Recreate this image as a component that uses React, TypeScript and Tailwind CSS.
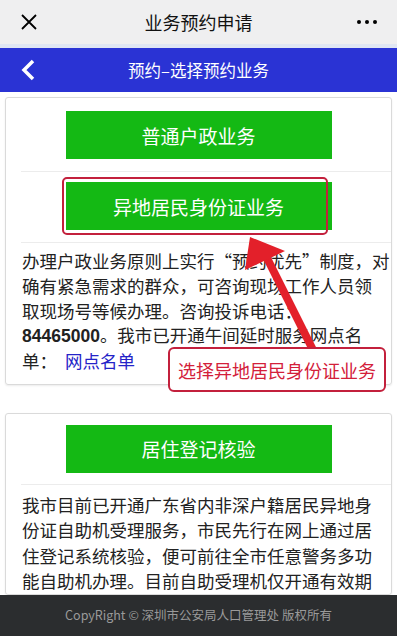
import { FC } from "react";

const font = { fontFamily: '"Noto Sans CJK SC", "Noto Sans", sans-serif' };

const GreenButton: FC<{ label: string }> = ({ label }) => (
    <div className="w-[266px] h-[48px] bg-[#14b914] flex items-center justify-center text-white text-[19px] leading-none">
        {label}
    </div>
);

const App: FC = () => (
    <div className="relative w-[397px] h-[636px] overflow-hidden flex flex-col bg-white text-[#222]" style={font}>
        {/* wechat top bar */}
        <div className="h-[44px] bg-[#efeff0] grid grid-cols-[1fr_auto_1fr] items-center px-[20px]">
            <svg width="18" height="18" viewBox="0 0 18 18" className="text-black">
                <path d="M2 2L16 16M16 2L2 16" stroke="currentColor" strokeWidth="1.8" />
            </svg>
            <div className="text-[18px] text-[#111] leading-none">业务预约申请</div>
            <div className="flex justify-end gap-[4px]">
                <div className="w-[4px] h-[4px] rounded-full bg-black" />
                <div className="w-[4px] h-[4px] rounded-full bg-black" />
                <div className="w-[4px] h-[4px] rounded-full bg-black" />
            </div>
        </div>
        <div className="h-[4px] bg-[#dfe6f3]" />
        {/* blue nav */}
        <div className="h-[44px] bg-[#2a33d4] grid grid-cols-[1fr_auto_1fr] items-center px-[20px]">
            <svg width="16" height="22" viewBox="0 0 16 22">
                <path d="M13 2L4 11L13 20" stroke="white" strokeWidth="3.5" fill="none" />
            </svg>
            <div className="text-[16.5px] text-white leading-none">预约–选择预约业务</div>
            <div />
        </div>

        {/* content */}
        <div className="flex-1 overflow-hidden px-[5px] pt-[5px]">
            <div className="border border-[#dadada] rounded-[3px] shadow-[0_1px_2px_rgba(0,0,0,0.08)]">
                <div className="pt-[13px] pb-[12px] flex justify-center">
                    <GreenButton label="普通户政业务" />
                </div>
                <div className="ml-[15px] border-t border-[#ececec]" />
                <div className="relative pt-[10px] pb-[12px] flex justify-center">
                    <GreenButton label="异地居民身份证业务" />
                    <div className="absolute left-[56px] top-[5px] w-[266px] h-[58px] border-2 border-[#c3203c] rounded-[5px]" />
                </div>
                <div className="ml-[15px] border-t border-[#ececec]" />
                <div className="px-[16px] pt-[6px] pb-[10px] text-[17.5px] leading-[24.75px] whitespace-nowrap">
                    <div>办理户政业务原则上实行“预约优先”制度，对</div>
                    <div>确有紧急需求的群众，可咨询现场工作人员领</div>
                    <div>取现场号等候办理。咨询投诉电话：</div>
                    <div>
                        <span className="font-bold" style={{ fontFamily: '"Liberation Sans", sans-serif' }}>84465000</span>
                        。我市已开通午间延时服务网点名
                    </div>
                    <div>
                        单： <span className="text-[#2323c8] ml-[4px]">网点名单</span>
                    </div>
                </div>
            </div>

            <div className="mt-[28px] border border-[#dadada] rounded-[3px] shadow-[0_1px_2px_rgba(0,0,0,0.08)]">
                <div className="pt-[11px] pb-[11px] flex justify-center">
                    <GreenButton label="居住登记核验" />
                </div>
                <div className="ml-[15px] border-t border-[#ececec]" />
                <div className="px-[16px] pt-[7px] text-[17.5px] leading-[25.5px] whitespace-nowrap">
                    <div>我市目前已开通广东省内非深户籍居民异地身</div>
                    <div>份证自助机受理服务，市民先行在网上通过居</div>
                    <div>住登记系统核验，便可前往全市任意警务多功</div>
                    <div>能自助机办理。目前自助受理机仅开通有效期</div>
                </div>
            </div>
        </div>

        {/* footer */}
        <div className="h-[41px] bg-[#2b2d2f] flex items-center justify-center text-[12.5px] text-[#9a9a9a]">
            CopyRight © 深圳市公安局人口管理处 版权所有
        </div>

        {/* annotation arrow */}
        <svg className="absolute inset-0 pointer-events-none" width="397" height="636" viewBox="0 0 397 636">
            <line x1="266" y1="256" x2="313" y2="350" stroke="#e3202a" strokeWidth="8" />
            <polygon points="250,237 245,270 285,251" fill="#e3202a" />
        </svg>
        <div className="absolute left-[168px] top-[347px] w-[218px] h-[45px] bg-white border-2 border-[#c3203c] rounded-[6px] flex items-center justify-center text-[18px] text-[#d3203a] leading-none">
            选择异地居民身份证业务
        </div>
    </div>
);

export default App;
